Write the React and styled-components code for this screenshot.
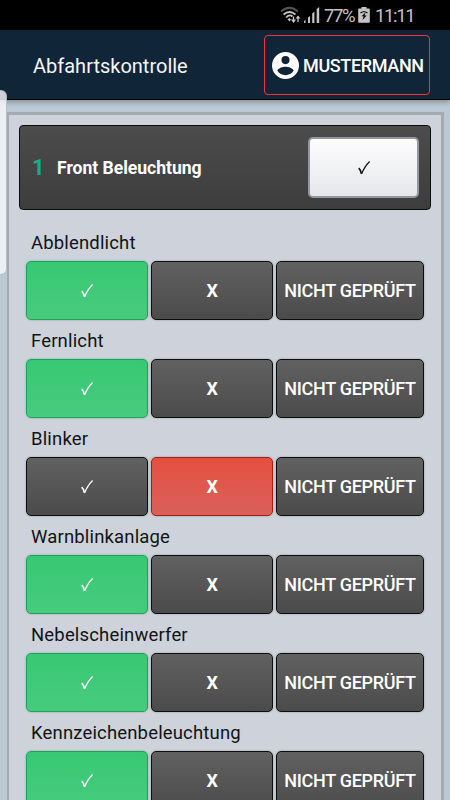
import styled, { createGlobalStyle, css } from "styled-components"

const GlobalStyle = createGlobalStyle`
  * {
    box-sizing: border-box;
  }

  body {
    margin: 0;
    background: #bbc9d5;
    font-family: Roboto, 'Noto Sans', sans-serif;
    overflow: hidden;
  }
`

const Screen = styled.div`
  position: relative;
  width: 450px;
  height: 800px;
  overflow: hidden;
  background: #bbc9d5;
`

const StatusBar = styled.div`
  height: 30px;
  padding-right: 35px;
  background: #000;
  color: #c4c4c4;

  display: flex;
  align-items: center;
  justify-content: flex-end;
`

const Percent = styled.span`
  width: 34px;
  margin-left: 4px;
  padding-top: 2px;
  font-size: 18.5px;
  line-height: 30px;
  letter-spacing: -1.4px;
  white-space: nowrap;
`

const Clock = styled.span`
  width: 40px;
  margin-left: 5px;
  padding-top: 2px;
  font-size: 18.5px;
  line-height: 30px;
  letter-spacing: -1.35px;
  white-space: nowrap;
`

const Toolbar = styled.header`
  height: 70px;
  padding: 0 20px 0 33px;
  background: #112539;
  border-bottom: 1px solid #000;
  box-shadow: 0 2px 5px rgba(0, 0, 0, 0.3);

  display: flex;
  align-items: center;
  justify-content: space-between;
`

const Title = styled.h1`
  margin: 3px 0 0;
  color: #f4f5f6;
  font-size: 20px;
  font-weight: 400;
`

const UserButton = styled.button`
  width: 166px;
  height: 60px;
  margin-top: 1px;
  padding: 0 0 0 7px;
  background: none;
  border: 1px solid #f2333f;
  border-radius: 4px;
  color: #fff;

  font-family: inherit;
  font-size: 18px;
  font-weight: 500;
  letter-spacing: -0.35px;
  white-space: nowrap;

  display: flex;
  align-items: center;
  gap: 4px;
`

const Panel = styled.main`
  width: 437px;
  height: 720px;
  margin: 12px 0 0 7px;
  padding: 10px 10px 0;
  background: #ced2da;
  border: 3px solid #a2abb1;
  border-left-width: 2px;
`

const GroupHeader = styled.section`
  width: 412px;
  height: 85px;
  padding: 0 11px 0 12px;
  background: linear-gradient(#4c4c4c, #3d3d3d);
  border: 1px solid #0c0c0c;
  border-radius: 4px;

  display: flex;
  align-items: center;
`

const GroupNumber = styled.span`
  width: 25px;
  color: #18ab8c;
  font-size: 22px;
  font-weight: 700;
`

const GroupTitle = styled.h2`
  flex: 1;
  margin: 0;
  color: #fff;
  font-size: 17.6px;
  font-weight: 700;
  letter-spacing: -0.04px;
  white-space: nowrap;
`

const CheckAll = styled.button`
  width: 111px;
  height: 61px;
  padding: 0;
  background: linear-gradient(#fdfdfe, #e6e7ea);
  border: 2px solid #9298a2;
  border-radius: 5px;
  color: #111;

  display: flex;
  align-items: center;
  justify-content: center;
`

const ItemList = styled.div`
  padding-top: 14px;
`

const Item = styled.section`
  height: 98px;
  padding-left: 7px;
`

const ItemLabel = styled.div`
  height: 37px;
  padding-left: 5px;
  color: #121314;
  font-size: 18.5px;
  line-height: 38px;
  letter-spacing: 0.16px;
`

const Choices = styled.div`
  display: grid;
  grid-template-columns: 122px 122px 148px;
  column-gap: 3px;
`

const tones = {
  idle: css`
    background: linear-gradient(#616161, #4b4b4b);
    border-color: #0d0d0d;
  `,
  ok: css`
    background: linear-gradient(#38c873, #47cb7d);
    border-color: #16a75a;
  `,
  bad: css`
    background: linear-gradient(#e55040, #d9605a);
    border-color: #a81d14;
  `,
}

const Choice = styled.button`
  height: 59px;
  padding: 0;
  border: 1px solid;
  border-radius: 5px;
  box-shadow: 0 0 2px rgba(0, 0, 0, 0.3);
  color: #fff;
  ${({ $tone }) => tones[$tone]}

  font-family: inherit;
  font-size: 18px;
  font-weight: ${({ $bold }) => ($bold ? 700 : 500)};
  letter-spacing: -0.3px;
  white-space: nowrap;

  display: flex;
  align-items: center;
  justify-content: center;
`

const EdgeHandle = styled.div`
  position: absolute;
  top: 90px;
  left: -6px;
  width: 13px;
  height: 185px;
  background: rgba(246, 248, 250, 0.82);
  border: 1px solid rgba(150, 160, 170, 0.6);
  border-radius: 6px;
`

const Check = () => (
  <svg width="14" height="16" viewBox="0 0 14 16" fill="none" stroke="currentColor">
    <path d="M1.7 8.1 Q3.3 9.3 4.5 13.7" strokeWidth="1.7" />
    <path d="M4.5 14 Q7.8 6.2 12.6 1.5" strokeWidth="1.2" />
  </svg>
)

const UserIcon = () => (
  <svg width="27" height="27" viewBox="2 2 20 20" fill="#fff">
    <path d="M12 2a10 10 0 1 0 0 20a10 10 0 0 0 0-20zm0 3a3 3 0 1 1 0 6a3 3 0 0 1 0-6zm0 14.2a7.2 7.2 0 0 1-6-3.22c.03-1.99 4-3.08 6-3.08s5.97 1.09 6 3.08a7.2 7.2 0 0 1-6 3.22z" />
  </svg>
)

const WifiIcon = () => (
  <svg width="22" height="18" viewBox="0 0 22 18" fill="none" stroke="#c4c4c4" strokeWidth="1.7">
    <path d="M1 5.500Q9.500-2 18 5.500" stroke="#555" />
    <path d="M3.500 8.500Q9.500 3.500 15.500 8.500M6 11.500Q9.500 8 12.500 10.500" />
    <path d="M7.500 13.200L9.500 12L11 13.500L9.500 15.500Z" fill="#c4c4c4" stroke="none" />
    <path d="M13.500 10.500V16M18 16V10.500" strokeWidth="1.3" />
    <path d="M11 13.500h5L13.500 17zM15.500 12.500h5L18 9.500z" fill="#c4c4c4" stroke="none" />
  </svg>
)

const SignalIcon = () => (
  <svg width="18" height="16" viewBox="-2 0 18 16" fill="#c4c4c4">
    <path d="M0 14L1.500 13V16H0zM4 10.500L6 9V16H4zM8.200 6.500L10.400 4.500V16H8.200zM12.700 2L15.200 0V16H12.700z" />
  </svg>
)

const BatteryIcon = () => (
  <svg width="12" height="16" viewBox="0 0 12 16">
    <path d="M3.500 0h5v1.500H11q.8 0 .8.800V15q0 .8-.8.800H1q-.8 0-.8-.8V2.300q0-.8.800-.8h2.500z" fill="#c4c4c4" />
    <path d="M2.500 6Q6 3.500 9.500 6" fill="none" stroke="#050505" strokeWidth="1.1" />
    <path d="M7.500 5.500L3.500 9.300H5.600L4.500 13L8.800 8.500H6.600z" fill="#050505" />
  </svg>
)

const items = [
  { label: "Abblendlicht", state: "ok" },
  { label: "Fernlicht", state: "ok" },
  { label: "Blinker", state: "bad" },
  { label: "Warnblinkanlage", state: "ok" },
  { label: "Nebelscheinwerfer", state: "ok" },
  { label: "Kennzeichenbeleuchtung", state: "ok" },
]

const CheckItem = ({ label, state }) => (
  <Item>
    <ItemLabel>{label}</ItemLabel>
    <Choices>
      <Choice $tone={state === "ok" ? "ok" : "idle"}><Check /></Choice>
      <Choice $tone={state === "bad" ? "bad" : "idle"} $bold>X</Choice>
      <Choice $tone="idle">NICHT GEPRÜFT</Choice>
    </Choices>
  </Item>
)

function App() {
  return (
    <Screen>
      <GlobalStyle />
      <StatusBar>
        <WifiIcon />
        <SignalIcon />
        <Percent>77%</Percent>
        <BatteryIcon />
        <Clock>11:11</Clock>
      </StatusBar>
      <Toolbar>
        <Title>Abfahrtskontrolle</Title>
        <UserButton>
          <UserIcon />
          MUSTERMANN
        </UserButton>
      </Toolbar>
      <Panel>
        <GroupHeader>
          <GroupNumber>1</GroupNumber>
          <GroupTitle>Front Beleuchtung</GroupTitle>
          <CheckAll><Check /></CheckAll>
        </GroupHeader>
        <ItemList>
          {items.map((item) => (
            <CheckItem key={item.label} {...item} />
          ))}
        </ItemList>
      </Panel>
      <EdgeHandle />
    </Screen>
  );
}

export default App;
